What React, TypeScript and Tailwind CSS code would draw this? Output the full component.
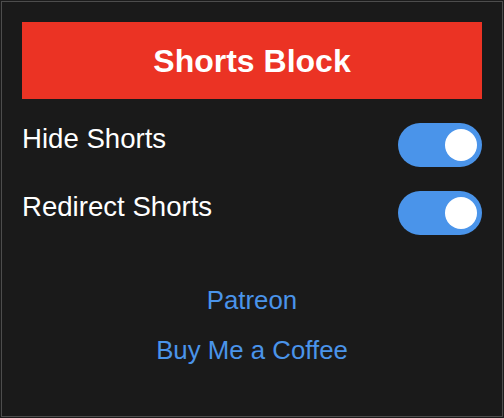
import { useState } from 'react'

const FONT = { fontFamily: '"Liberation Sans", Arial, Helvetica, sans-serif' }

const Toggle = ({ on, onChange }: { on: boolean; onChange: () => void }) => (
  <button
    onClick={onChange}
    className={`flex h-[44px] w-[84px] shrink-0 items-center rounded-full px-[5px] ${
      on ? 'justify-end bg-[#4a94ea]' : 'justify-start bg-[#555555]'
    }`}
  >
    <span className="block h-[32px] w-[32px] rounded-full bg-white" />
  </button>
)

export default function App() {
  const [hide, setHide] = useState(true)
  const [redirect, setRedirect] = useState(true)

  return (
    <div className="h-[418px] w-[504px] bg-[#1c1c1c] pl-px pt-px" style={FONT}>
      <div className="flex h-[416px] w-[502px] flex-col border border-[#4d4d4d] bg-[#1a1a1a] px-5 pt-5">
        {/* Header */}
        <div className="flex h-[77px] items-center justify-center bg-[#eb3324]">
          <h1 className="text-[32px] font-bold text-white">Shorts Block</h1>
        </div>

        {/* Toggles */}
        <div className="mt-[24px] flex flex-col gap-[24px]">
          <div className="flex items-start justify-between">
            <span className="text-[27.6px] leading-[normal] text-white">Hide Shorts</span>
            <Toggle on={hide} onChange={() => setHide(!hide)} />
          </div>
          <div className="flex items-start justify-between">
            <span className="text-[27.6px] leading-[normal] text-white">Redirect Shorts</span>
            <Toggle on={redirect} onChange={() => setRedirect(!redirect)} />
          </div>
        </div>

        {/* Links */}
        <div className="mt-[51px] flex flex-col items-center gap-[21px] text-[25.8px] leading-[normal] text-[#4a94ea]">
          <a href="#">Patreon</a>
          <a href="#">Buy Me a Coffee</a>
        </div>
      </div>
    </div>
  )
}
